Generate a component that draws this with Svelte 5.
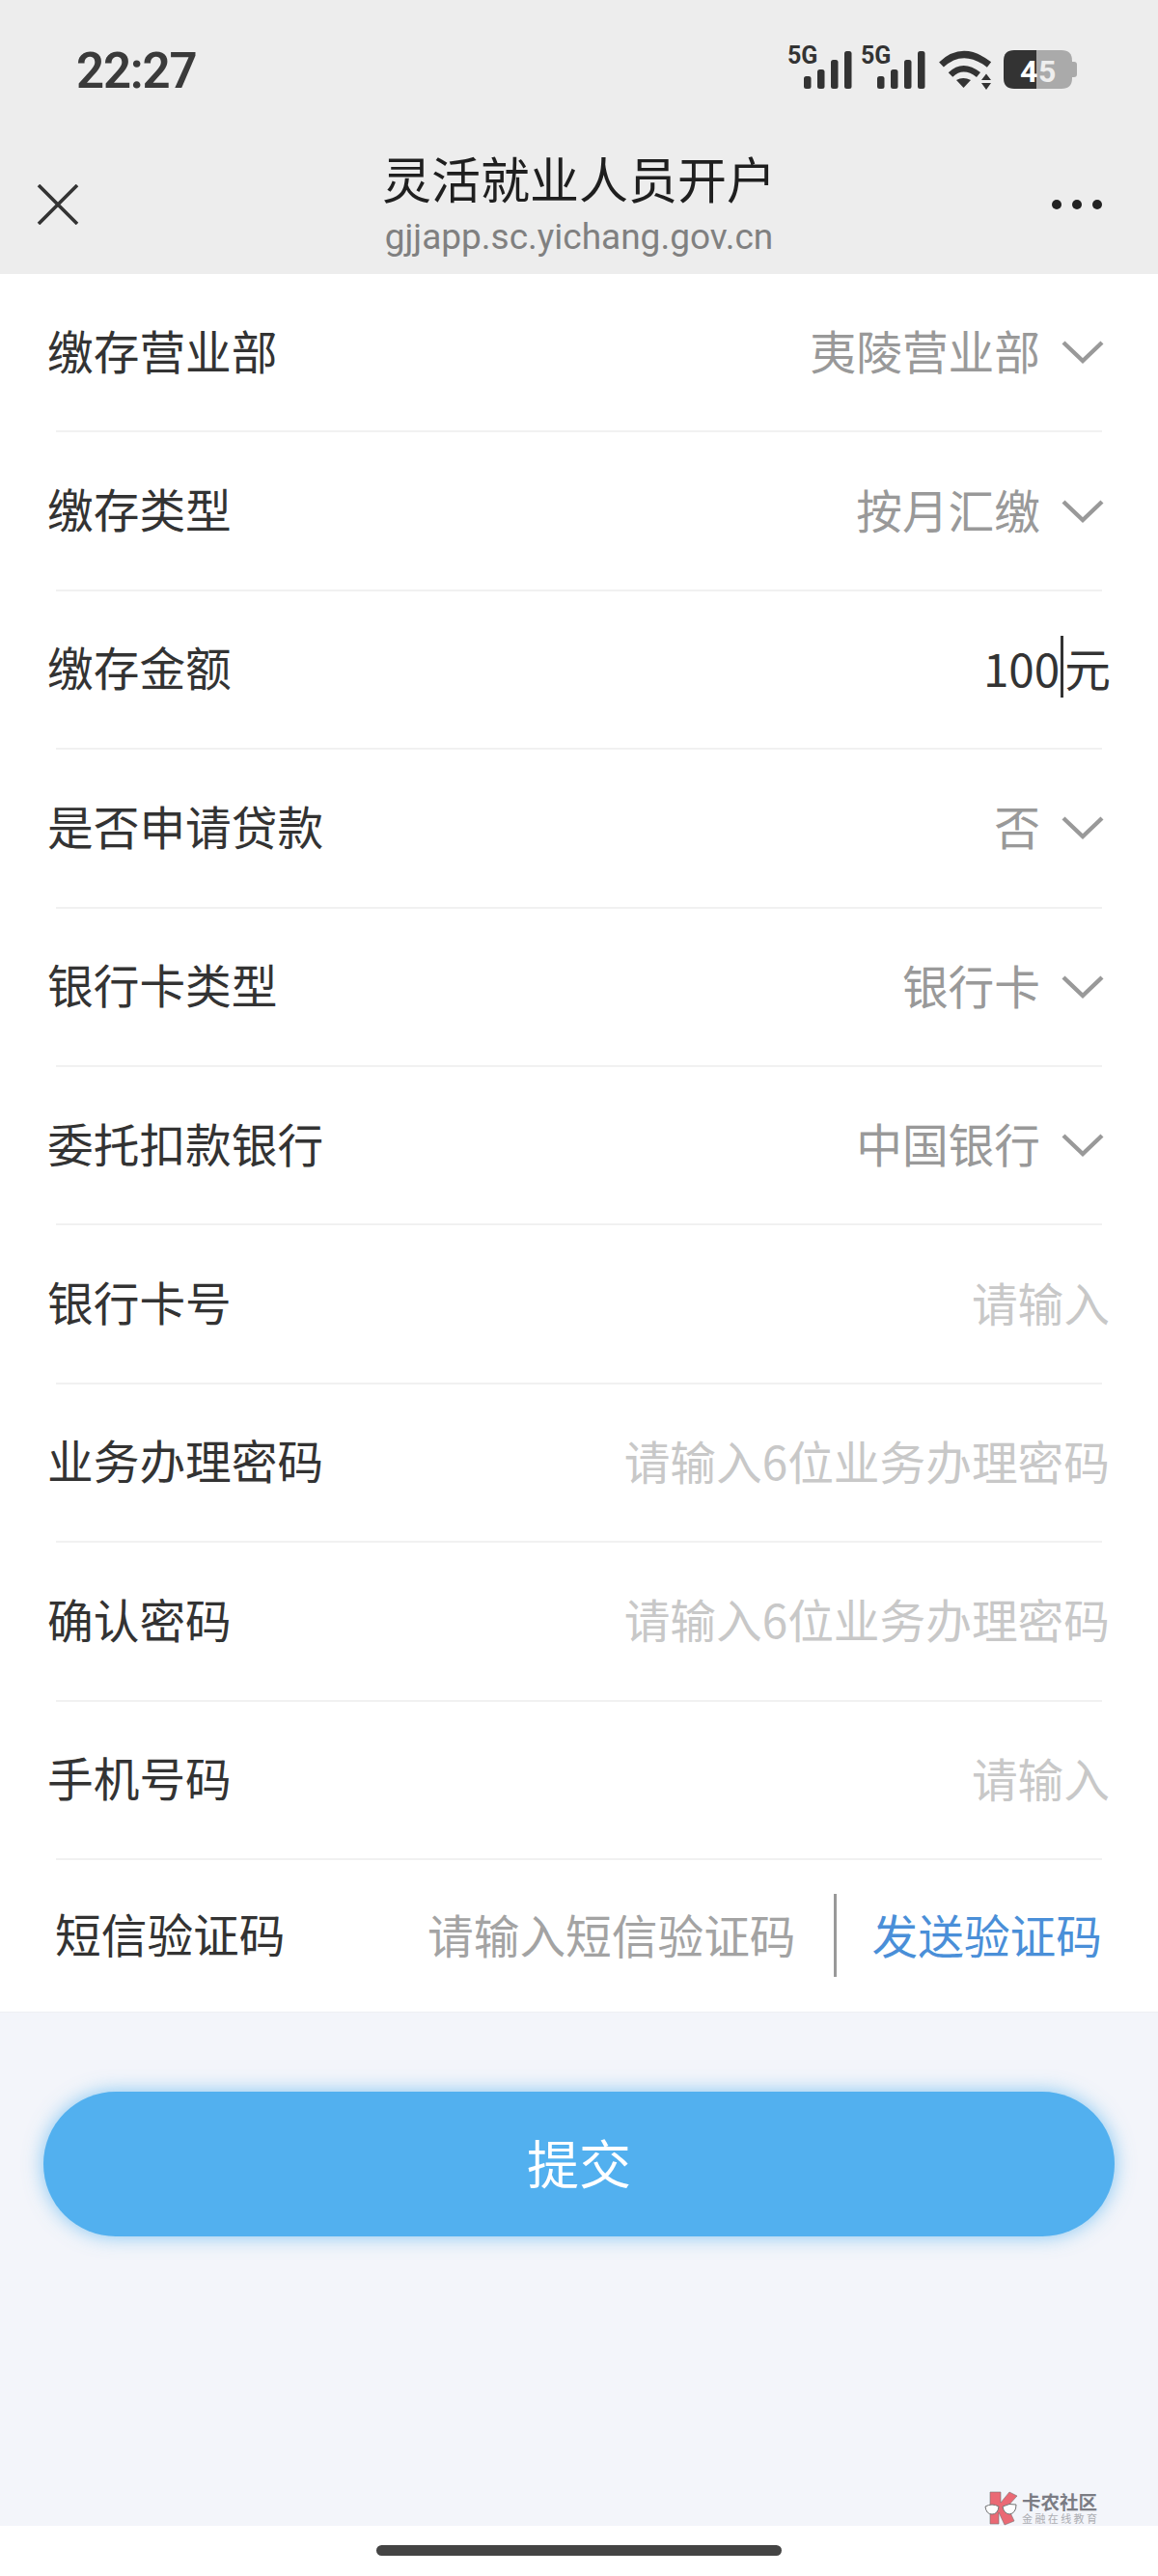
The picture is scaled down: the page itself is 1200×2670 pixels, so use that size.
<script>
	const rows = [
		{ label: '缴存营业部', value: '夷陵营业部', select: true },
		{ label: '缴存类型', value: '按月汇缴', select: true },
		{ label: '缴存金额', amount: '100' },
		{ label: '是否申请贷款', value: '否', select: true },
		{ label: '银行卡类型', value: '银行卡', select: true },
		{ label: '委托扣款银行', value: '中国银行', select: true },
		{ label: '银行卡号', hint: '请输入' },
		{ label: '业务办理密码', hint: '请输入6位业务办理密码' },
		{ label: '确认密码', hint: '请输入6位业务办理密码' },
		{ label: '手机号码', hint: '请输入' }
	];
	const barX = [0, 14, 28, 42];
	const barTop = [79, 72, 62, 53];
</script>

<div class="page">
	<header class="top">
		<div class="status">
			<span class="time">22:27</span>
			<svg class="status-icons" viewBox="810 40 310 60" width="310" height="60">
				{#each [0, 76] as off}
					<text x={816 + off} y="66" class="net">5G</text>
					{#each barX as x, i}
						<rect x={833 + off + x} y={barTop[i]} width="7.5" height={92 - barTop[i]} rx="2.5" fill="#333" />
					{/each}
				{/each}
				<path d="M975.5 67 Q998 46 1025 67" fill="none" stroke="#333" stroke-width="7" />
				<path d="M985 77.5 Q998 65 1014 77.5" fill="none" stroke="#333" stroke-width="6.5" />
				<path d="M991 83 Q998 79 1006 83 L998.5 91 Z" fill="#333" />
				<path d="M1017 83 L1027 83 L1022 76.5 Z M1017 86 L1027 86 L1022 93 Z" fill="#333" />
				<path d="M1074 52 H1100 Q1111 52 1111 63 V81 Q1111 92 1100 92 H1074 Z" fill="#aaa" />
				<path d="M1111 64 h2 q3 0 3 3 v10 q0 3 -3 3 h-2 Z" fill="#aaa" />
				<path d="M1074 52 H1051 Q1040 52 1040 63 V81 Q1040 92 1051 92 H1074 Z" fill="#333" />
				<text x="1057" y="85" class="batt">4</text>
				<text x="1076" y="85" class="batt light">5</text>
			</svg>
		</div>
		<nav class="bar">
			<svg class="close" viewBox="0 0 44 42" width="44" height="42">
				<path d="M2 1 L42 41 M42 1 L2 41" stroke="#333" stroke-width="3.6" fill="none" />
			</svg>
			<div class="heading">
				<div class="title">灵活就业人员开户</div>
				<div class="url">gjjapp.sc.yichang.gov.cn</div>
			</div>
			<div class="dots"><i></i><i></i><i></i></div>
		</nav>
	</header>

	<section class="form">
		{#each rows as row}
			<div class="row">
				<span class="label">{row.label}</span>
				{#if row.select}
					<span class="value">{row.value}</span>
					<svg class="chevron" viewBox="0 0 44 26" width="44" height="26">
						<path d="M2 3 L22 22 L42 3" fill="none" stroke="#999" stroke-width="4.4" />
					</svg>
				{:else if row.amount}
					<span class="amount">{row.amount}<b class="caret"></b>元</span>
				{:else}
					<span class="hint">{row.hint}</span>
				{/if}
			</div>
			<div class="divider"></div>
		{/each}
		<div class="sms">
			<span class="label">短信验证码</span>
			<span class="sms-hint">请输入短信验证码</span>
			<span class="sep"></span>
			<span class="send">发送验证码</span>
		</div>
	</section>

	<main class="rest">
		<button class="submit">提交</button>
		<div class="mark">
			<svg viewBox="0 0 36 36" width="36" height="36">
				<path d="M6 1 L17 1 L17 12 L26 1 L34 5 L24 16 L31 31 L21 35 L15 22 L15 34 L6 34 Z" fill="#ea5a66" stroke="#666" stroke-width=".6" />
				<path d="M1 16 Q8 12 15 16 Q14 24 8 24 Q2 24 1 16 Z M19 16 Q26 12 33 14 Q33 23 26 24 Q20 23 19 16 Z" fill="#fff" stroke="#666" stroke-width="1" />
			</svg>
			<div>
				<div class="mark-name">卡农社区</div>
				<div class="mark-sub">金融在线教育</div>
			</div>
		</div>
	</main>

	<footer class="home"><span class="home-bar"></span></footer>
</div>

<style>
	:global(body) {
		margin: 0;
	}

	.page {
		display: flex;
		flex-direction: column;
		width: 1200px;
		height: 2670px;
		background: #f3f5fa;
		color: #333;
		font-family: "Noto Sans CJK SC", "Noto Sans", sans-serif;
	}

	.top {
		height: 284px;
		background: #ededed;
	}

	.status {
		display: flex;
		justify-content: space-between;
		align-items: flex-start;
		height: 140px;
		padding: 40px 80px 0 79px;
		box-sizing: border-box;
	}

	.time {
		font-family: Roboto, sans-serif;
		font-size: 51px;
		font-weight: 600;
		line-height: 68px;
		letter-spacing: -1.2px;
		color: #3a3a3a;
	}

	.net {
		font-family: Roboto, sans-serif;
		font-size: 25px;
		font-weight: 700;
		fill: #333;
	}

	.batt {
		font-family: Roboto, sans-serif;
		font-size: 32px;
		font-weight: 700;
		fill: #fff;
	}

	.batt.light {
		fill: #eee;
	}

	.bar {
		display: grid;
		grid-template-columns: 1fr auto 1fr;
		align-items: center;
		height: 144px;
		padding: 0 38px;
	}

	.heading {
		text-align: center;
	}

	.title {
		font-size: 51px;
		line-height: 70px;
		color: #1f1f1f;
		margin-top: -6px;
	}

	.url {
		font-family: Roboto, sans-serif;
		font-size: 37px;
		line-height: 46px;
		color: #808080;
		margin-top: 4px;
	}

	.dots {
		display: flex;
		justify-content: flex-end;
		gap: 11px;
		margin-right: 20px;
	}

	.dots i {
		width: 10px;
		height: 10px;
		border-radius: 50%;
		background: #222;
	}

	.form {
		background: #fff;
		height: 1801px;
	}

	.row {
		display: flex;
		align-items: center;
		height: 162.4px;
		padding: 0 50px 0 49px;
	}

	.label {
		flex: 1;
		font-size: 47.7px;
		line-height: 60px;
		padding-bottom: 5px;
		color: #333;
	}

	.value {
		font-size: 47.7px;
		padding-bottom: 5px;
		color: #999;
	}

	.chevron {
		margin: 0 6px 0 22px;
	}

	.amount {
		display: flex;
		align-items: center;
		margin-right: -1px;
		font-size: 47.7px;
		padding-bottom: 5px;
		color: #333;
	}

	.caret {
		width: 3px;
		height: 64px;
		margin: 0 1px 0 1px;
		background: #333;
	}

	.hint {
		font-size: 47.7px;
		padding-bottom: 5px;
		color: #c8c8c8;
	}

	.divider {
		height: 2px;
		margin: 0 58px;
		background: #f1f1f1;
	}

	.sms {
		display: flex;
		align-items: center;
		height: 156px;
		padding: 0 58px 0 57px;
	}

	.sms-hint {
		font-size: 47.7px;
		padding-bottom: 3px;
		color: #a3a3a3;
	}

	.sep {
		width: 3px;
		height: 86px;
		margin: 0 37px 0 39px;
		background: #999;
	}

	.send {
		font-size: 47.7px;
		padding-bottom: 3px;
		color: #4a8fd8;
	}

	.sms .label {
		padding-bottom: 3px;
	}

	.rest {
		position: relative;
		flex: 1;
		padding: 82px 45px 0;
		border-top: 1px solid #eef0f3;
	}

	.submit {
		display: block;
		width: 100%;
		height: 150px;
		padding: 0 0 5px;
		border: 0;
		border-radius: 75px;
		background: #52b0ef;
		box-shadow: 0 0 20px rgba(82, 176, 239, 0.7);
		color: #fff;
		font-family: inherit;
		font-size: 54px;
	}

	.mark {
		position: absolute;
		left: 1020px;
		bottom: 0;
		display: flex;
		gap: 3px;
		opacity: 0.9;
	}

	.mark-name {
		font-size: 19.5px;
		font-weight: 700;
		line-height: 21px;
		color: #6f7078;
	}

	.mark-sub {
		font-size: 11px;
		line-height: 14px;
		letter-spacing: 2.4px;
		color: #a5a6ab;
	}

	.home {
		display: flex;
		justify-content: center;
		height: 52px;
		background: #fff;
	}

	.home-bar {
		width: 420px;
		height: 11px;
		margin-top: 20px;
		border-radius: 6px;
		background: #444;
	}
</style>
